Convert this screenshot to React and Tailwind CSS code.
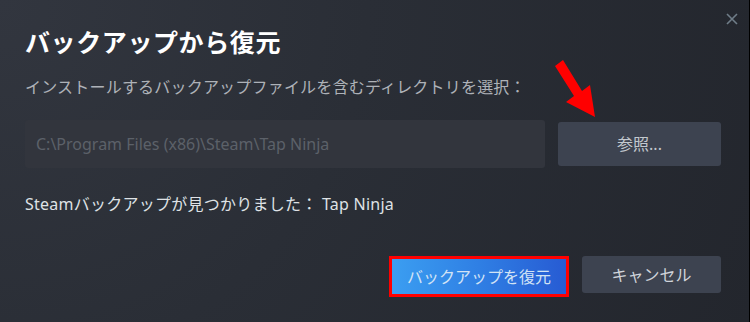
import React from 'react';

const font = { fontFamily: '"Noto Sans", "Noto Sans CJK JP", sans-serif' };

const RestoreBackupDialog = () => {
  return (
    <div
      className="relative w-[750px] h-[322px] overflow-hidden border-r border-black bg-[radial-gradient(circle_at_0%_0%,#32363f_0%,#2a2e36_45%,#23262d_100%)] pl-[25px] pr-[28px] pt-[27px]"
      style={font}
    >
      {/* close */}
      <svg className="absolute left-[726px] top-[13px]" width="12" height="12" viewBox="0 0 12 12">
        <path d="M1 1 L11 11 M11 1 L1 11" stroke="#6f7d88" strokeWidth="1.6" />
      </svg>

      {/* annotation arrow */}
      <svg className="absolute left-0 top-0 pointer-events-none" width="750" height="322">
        <polygon points="555,66 563,60 582,91 590,85 595,117 566,102 574,96" fill="#ff0000" />
      </svg>

      <h1 className="text-[25px] leading-[30px] font-bold tracking-[0.6px] text-white">バックアップから復元</h1>

      <p className="mt-[20px] text-[16px] leading-[20px] tracking-[0.2px] text-[#aeb2b8]">
        インストールするバックアップファイルを含むディレクトリを選択：
      </p>

      <div className="mt-[23px] flex items-center gap-[13px]">
        <div className="w-[520px] h-[48px] rounded-[3px] bg-[#32353d] flex items-center px-[11px] text-[16px] text-[#5c6169]">
          C:\Program Files (x86)\Steam\Tap Ninja
        </div>
        <button className="w-[163px] h-[44px] rounded-[3px] bg-[#3d4350] text-[16px] text-[#c3c8ce]">
          参照...
        </button>
      </div>

      <p className="mt-[26px] text-[16px] leading-[20px] tracking-[0.25px] text-[#dfe2e6]">
        Steamバックアップが見つかりました： Tap Ninja
      </p>

      <div className="mt-[42px] flex justify-end items-start gap-[13px]">
        <div className="w-[180px] h-[41px] border-[3px] border-[#ff0000] bg-[linear-gradient(90deg,#3b9ef1_0%,#2f7fe4_50%,#275bd3_100%)] flex items-center justify-center text-[16px] text-[#d2e3f5]">
          バックアップを復元
        </div>
        <button className="w-[139px] h-[37px] rounded-[3px] bg-[#3d4350] text-[16px] text-[#d0d4da]">
          キャンセル
        </button>
      </div>
    </div>
  );
};

export default function App() {
  return <RestoreBackupDialog />;
}
